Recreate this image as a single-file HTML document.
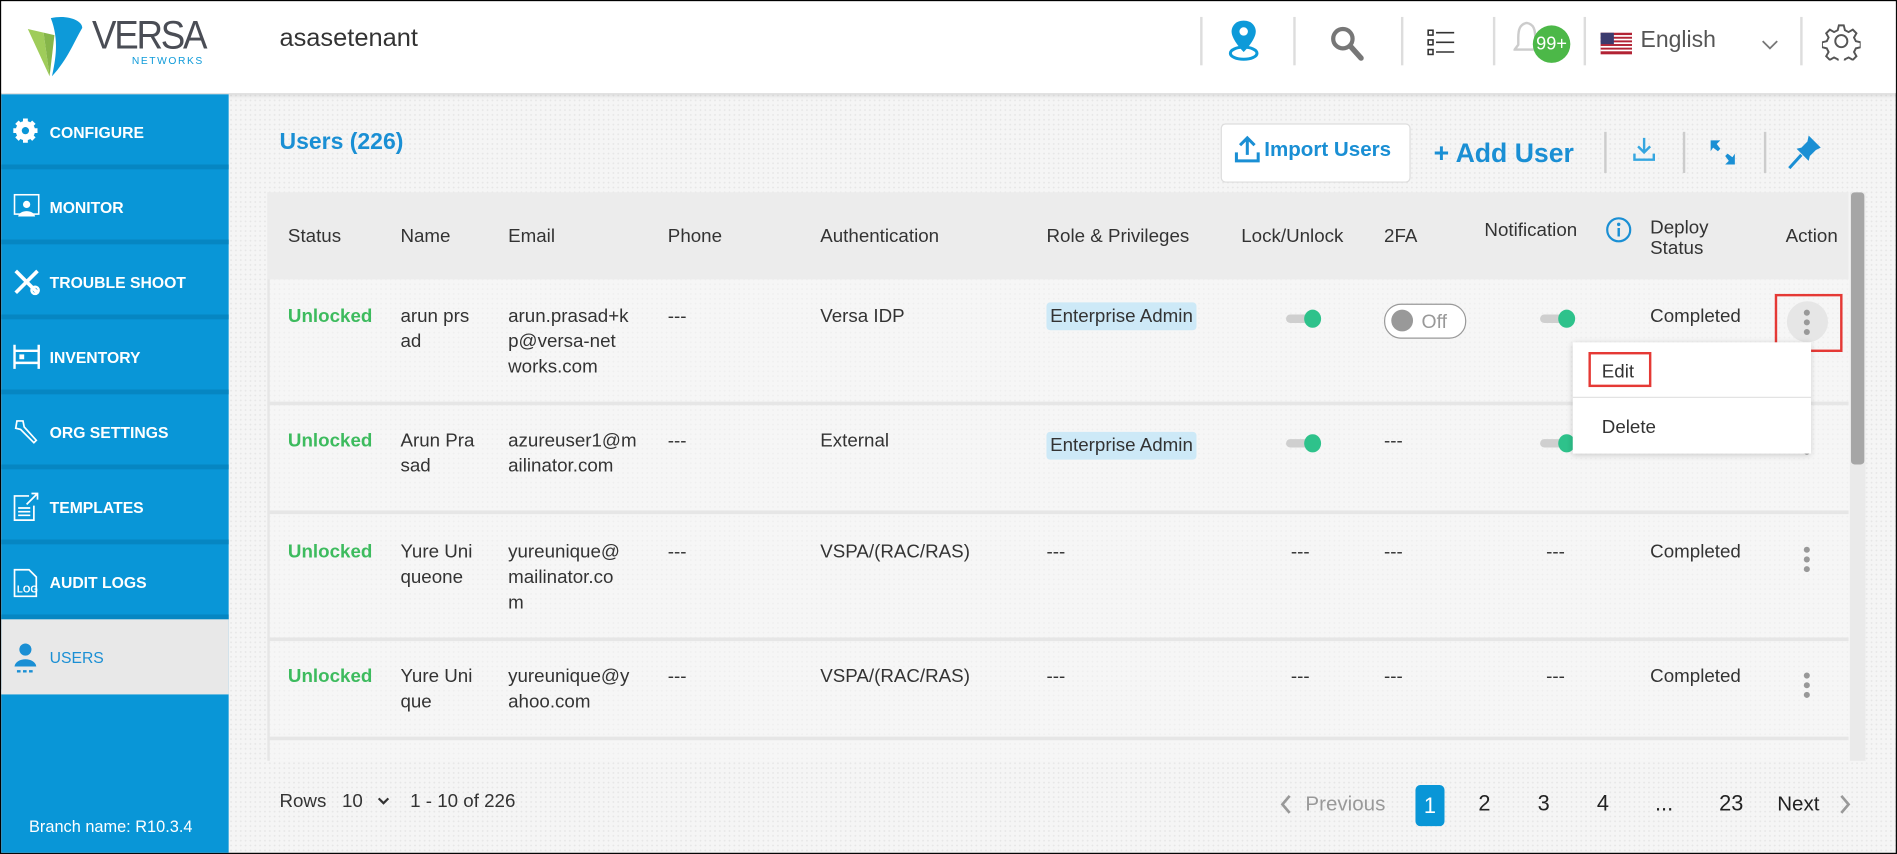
<!DOCTYPE html>
<html><head><meta charset="utf-8"><style>
html,body{margin:0;padding:0;width:1897px;height:854px;overflow:hidden;background:#fff}
#s{position:absolute;left:0;top:0;width:1568px;height:706px;transform:scale(1.2098,1.2096);transform-origin:0 0;font-family:"Liberation Sans",sans-serif;color:#333;overflow:hidden;box-sizing:border-box;border:1px solid #000;background:#f5f5f5;
background-image:radial-gradient(#e6e6e6 0.6px,transparent 0.8px);background-size:4px 4px}
.a{position:absolute;white-space:nowrap}
#hdr{position:absolute;left:0;top:0;width:1568px;height:76px;background:#fff;box-shadow:0 2px 4px rgba(0,0,0,.12)}
.vd{position:absolute;top:13px;width:2px;height:40px;background:#ddd}
#side{position:absolute;left:0;top:77px;width:188px;height:629px;background:#0996d7}
.it{position:absolute;left:0;width:188px;height:58px;border-bottom:4px solid #0686c2;color:#fff;font-weight:bold;font-size:13px}
.it span{position:absolute;left:40px;top:24px}
.it svg{position:absolute;left:9px;top:19px}
.hd{font-size:15.5px;color:#333}
.c{font-size:15.5px;color:#333;line-height:21px}
.g{color:#3dbb5e;font-weight:bold}
.rl{position:absolute;left:220px;width:1307px;height:3px;background:#e6e6e6}
.badge{background:#cde9f7;border-radius:3px;padding:3px 3px}
.tg{position:absolute;width:26px;height:7px;border-radius:4px;background:#cfcfcf}
.tg:after{content:"";position:absolute;right:-3px;top:-4px;width:14px;height:15px;border-radius:50%;background:#2ec28b}
.dots{position:absolute;width:5px}
.dots i{display:block;width:5px;height:5px;border-radius:50%;background:#999;margin-bottom:3px}
</style></head><body><div id="s">
<div id="hdr">
 <svg class="a" style="left:15px;top:8px" width="60" height="56" viewBox="0 0 60 56"><path d="M7 15 L20 18 L25 54 Z" fill="#9fcc5a"/><path d="M26 6 C40 3 52 8 52 14 C46 24 40 40 27 54 C30 40 33 24 26 6Z" fill="#0d9ad9"/><path d="M20 18 L29 20 L25 54Z" fill="#86b64a"/></svg>
 <div class="a" style="left:75px;top:9px;font-size:33px;color:#4a4d55;letter-spacing:-2px;transform:scaleX(0.92);transform-origin:0 0">VERSA</div>
 <div class="a" style="left:108px;top:44px;font-size:8.5px;color:#0d9ad9;letter-spacing:1.3px">NETWORKS</div>
 <div class="a" style="left:230px;top:19px;font-size:21px;color:#333">asasetenant</div>
 <div class="vd" style="left:991px"></div><div class="vd" style="left:1068px"></div><div class="vd" style="left:1157px"></div><div class="vd" style="left:1233px"></div><div class="vd" style="left:1308px"></div><div class="vd" style="left:1487px"></div>
 <svg class="a" style="left:1013px;top:14px" width="28" height="36" viewBox="0 0 28 36"><path d="M14 2 C7 2 4 7 4 11 C4 18 14 28 14 28 C14 28 24 18 24 11 C24 7 21 2 14 2Z" fill="#0d9ad9"/><circle cx="14" cy="11" r="3.5" fill="#fff"/><ellipse cx="14" cy="29" rx="11" ry="5" fill="none" stroke="#0d9ad9" stroke-width="2.5"/></svg>
 <svg class="a" style="left:1098px;top:20px" width="30" height="30" viewBox="0 0 30 30"><circle cx="11" cy="11" r="8" fill="none" stroke="#777" stroke-width="3.5"/><path d="M17 17 L26 27" stroke="#777" stroke-width="4.5" stroke-linecap="round"/></svg>
 <svg class="a" style="left:1178px;top:22px" width="26" height="26" viewBox="0 0 26 26"><g fill="none" stroke="#333" stroke-width="1.3"><rect x="1.5" y="2" width="4" height="4"/><rect x="1.5" y="10" width="4" height="4"/><rect x="1.5" y="18" width="4" height="4"/><path d="M8 4H23M8 12H23M8 20H23"/></g></svg>
 <svg class="a" style="left:1250px;top:16px" width="22" height="30" viewBox="0 0 22 30"><path d="M11 2 C5 3 4 8 4 14 L4 20 L1 24 L21 24 L18 20 L18 14 C18 8 17 3 11 2Z" fill="none" stroke="#ccc" stroke-width="2"/></svg>
 <div class="a" style="left:1266px;top:20px;width:31px;height:31px;border-radius:50%;background:#4cb848;color:#fff;font-size:15px;line-height:31px;text-align:center">99+</div>
 <svg class="a" style="left:1322px;top:26px" width="26" height="18" viewBox="0 0 26 18"><rect width="26" height="18" fill="#b22234"/><g fill="#fff"><rect y="2" width="26" height="1.4"/><rect y="5" width="26" height="1.4"/><rect y="8" width="26" height="1.4"/><rect y="11" width="26" height="1.4"/><rect y="14" width="26" height="1.4"/></g><rect width="11" height="9.5" fill="#3c3b6e"/></svg>
 <div class="a" style="left:1355px;top:22px;font-size:19px;color:#555">English</div>
 <svg class="a" style="left:1454px;top:30px" width="16" height="12" viewBox="0 0 16 12"><path d="M2 3 L8 9 L14 3" fill="none" stroke="#777" stroke-width="1.5"/></svg>
 <svg class="a" style="left:1505px;top:17px" width="32" height="32" viewBox="0 0 32 32"><g fill="none" stroke="#555" stroke-width="1.6"><circle cx="16" cy="16" r="5"/><path d="M14 3h4l1 4 3 1.5 3.5-2 3 3-2 3.5 1.5 3 4 1v4l-4 1-1.5 3 2 3.5-3 3-3.5-2-3 1.5-1 4h-4l-1-4-3-1.5-3.5 2-3-3 2-3.5-1.5-3-4-1v-4l4-1 1.5-3-2-3.5 3-3 3.5 2 3-1.5z"/></g></svg>
</div>
<div id="side">
 <div class="it" style="top:0"><svg width="22" height="22" viewBox="0 0 22 22"><circle cx="11" cy="11" r="8" fill="#fff"/><g stroke="#fff" stroke-width="4"><path d="M11 1v20M1 11h20M4 4l14 14M18 4L4 18"/></g><circle cx="11" cy="11" r="3" fill="#0996d7"/></svg><span>CONFIGURE</span></div>
 <div class="it" style="top:62px"><svg width="24" height="24" viewBox="0 0 24 24"><rect x="2" y="2" width="20" height="16" fill="none" stroke="#fff" stroke-width="1.3"/><circle cx="12" cy="10" r="3" fill="#fff"/><path d="M5 20 C6 14 18 14 19 20Z" fill="#fff"/></svg><span>MONITOR</span></div>
 <div class="it" style="top:124px"><svg width="24" height="24" viewBox="0 0 24 24"><path d="M3 3 L21 21 M21 3 L3 21" stroke="#fff" stroke-width="3"/><circle cx="19" cy="19" r="3" fill="none" stroke="#fff" stroke-width="2"/></svg><span>TROUBLE SHOOT</span></div>
 <div class="it" style="top:186px"><svg width="24" height="24" viewBox="0 0 24 24"><g fill="none" stroke="#fff" stroke-width="2"><path d="M2 2v20M22 2v20M2 7h20M2 17h20"/></g><rect x="6" y="10" width="4" height="4" fill="#fff"/></svg><span>INVENTORY</span></div>
 <div class="it" style="top:248px"><svg width="24" height="24" viewBox="0 0 24 24"><path d="M4 3 L9 3 L10 8 L20 19 L18 21 L7 10 L3 9Z" fill="none" stroke="#fff" stroke-width="1.4"/></svg><span>ORG SETTINGS</span></div>
 <div class="it" style="top:310px"><svg width="24" height="24" viewBox="0 0 24 24"><g fill="none" stroke="#fff" stroke-width="1.4"><path d="M14 3H2v20h16V11"/><path d="M12 10 L21 1 M16 1h5v5M5 13h10M5 16h10M5 19h10"/></g></svg><span>TEMPLATES</span></div>
 <div class="it" style="top:372px"><svg width="24" height="26" viewBox="0 0 24 26"><path d="M2 2h12l6 6v16H2z" fill="none" stroke="#fff" stroke-width="1.4"/><text x="4" y="21" font-size="8" fill="#fff" font-family="Liberation Sans">LOG</text></svg><span>AUDIT LOGS</span></div>
 <div class="it" style="top:434px;background:#e8e8e8;color:#1a8fd4;font-weight:normal;border-bottom:4px solid #e8e8e8"><svg width="24" height="26" viewBox="0 0 24 26"><circle cx="11" cy="6" r="5" fill="#1a8fd4"/><path d="M2 20 C3 12 19 12 20 20Z" fill="#1a8fd4"/><path d="M4 24h3M9 24h3M14 24h3" stroke="#1a8fd4" stroke-width="2"/></svg><span>USERS</span></div>
 <div class="a" style="left:23px;top:598px;color:#fff;font-size:13.5px">Branch name: R10.3.4</div>
</div>
<div class="a" style="left:230px;top:106px;font-size:19px;color:#1a8fd4;font-weight:bold">Users (226)</div>
<div class="a" style="left:1008px;top:101px;width:155px;height:47px;border:1px solid #ddd;border-radius:4px;background:#fff"></div>
<svg class="a" style="left:1018px;top:111px" width="24" height="24" viewBox="0 0 24 24"><path d="M12 2v14M6 8l6-6 6 6" fill="none" stroke="#1a8fd4" stroke-width="2.5"/><path d="M3 14v7h18v-7" fill="none" stroke="#1a8fd4" stroke-width="2.5"/></svg>
<div class="a" style="left:1044px;top:113px;font-size:17px;color:#1a8fd4;font-weight:bold">Import Users</div>
<div class="a" style="left:1184px;top:113px;font-size:22px;color:#1a8fd4;font-weight:bold">+ Add User</div>
<div class="a" style="left:1325px;top:108px;width:2px;height:34px;background:#ccc"></div>
<div class="a" style="left:1390px;top:108px;width:2px;height:34px;background:#ccc"></div>
<div class="a" style="left:1457px;top:108px;width:2px;height:34px;background:#ccc"></div>
<svg class="a" style="left:1348px;top:112px" width="20" height="22" viewBox="0 0 20 22"><path d="M10 1v12M5 8l5 5 5-5" fill="none" stroke="#35a6e0" stroke-width="2"/><path d="M2 14v5h16v-5" fill="none" stroke="#35a6e0" stroke-width="2"/></svg>
<svg class="a" style="left:1410px;top:112px" width="26" height="26" viewBox="0 0 26 26"><path d="M3 3l8 0-3 3 3 4-2 2-4-3-2 3z" fill="#1a8fd4"/><path d="M23 23l-8 0 3-3-3-4 2-2 4 3 2-3z" fill="#1a8fd4"/></svg>
<svg class="a" style="left:1476px;top:108px" width="30" height="32" viewBox="0 0 30 32"><path d="M18 3 L28 13 L24 15 L19 20 L18 24 L8 14 L12 13 L17 8Z" fill="#1a8fd4"/><path d="M12 19 L2 30" stroke="#1a8fd4" stroke-width="2.5"/></svg>
<!-- table -->
<div class="a" style="left:220px;top:158px;width:1307px;height:470px;background:rgba(248,248,248,.5);border-left:2px solid #e6e6e6"></div>
<div class="a" style="left:220px;top:158px;width:1307px;height:72px;background:#ececec"></div>
<div class="a" style="left:1528px;top:158px;width:13px;height:470px;background:#eaeaea"></div>
<div class="a" style="left:1529px;top:158px;width:11px;height:225px;background:#a6a6a6;border-radius:3px"></div>
<div class="a hd" style="left:237px;top:186px">Status</div>
<div class="a hd" style="left:330px;top:186px">Name</div>
<div class="a hd" style="left:419px;top:186px">Email</div>
<div class="a hd" style="left:551px;top:186px">Phone</div>
<div class="a hd" style="left:677px;top:186px">Authentication</div>
<div class="a hd" style="left:864px;top:186px">Role &amp; Privileges</div>
<div class="a hd" style="left:1025px;top:186px">Lock/Unlock</div>
<div class="a hd" style="left:1143px;top:186px">2FA</div>
<div class="a hd" style="left:1226px;top:181px">Notification</div>
<svg class="a" style="left:1326px;top:178px" width="22" height="22" viewBox="0 0 22 22"><circle cx="11" cy="11" r="9.5" fill="none" stroke="#1a8fd4" stroke-width="1.8"/><circle cx="11" cy="6.5" r="1.4" fill="#1a8fd4"/><path d="M11 9.5v7" stroke="#1a8fd4" stroke-width="2"/></svg>
<div class="a hd" style="left:1363px;top:179px;line-height:17px">Deploy<br>Status</div>
<div class="a hd" style="left:1475px;top:186px">Action</div>
<div class="rl" style="top:331px"></div><div class="rl" style="top:421px"></div><div class="rl" style="top:526px"></div><div class="rl" style="top:608px"></div>
<!-- row1 -->
<div class="a c g" style="left:237px;top:250px">Unlocked</div>
<div class="a c" style="left:330px;top:250px">arun prs<br>ad</div>
<div class="a c" style="left:419px;top:250px">arun.prasad+k<br>p@versa-net<br>works.com</div>
<div class="a c" style="left:551px;top:250px">---</div>
<div class="a c" style="left:677px;top:250px">Versa IDP</div>
<div class="a c" style="left:864px;top:250px"><span class="badge">Enterprise Admin</span></div>
<div class="tg" style="left:1062px;top:259px"></div>
<div class="a" style="left:1143px;top:250px;width:66px;height:27px;border:1px solid #999;border-radius:14px;background:#fff"></div>
<div class="a" style="left:1149px;top:255px;width:18px;height:18px;border-radius:50%;background:#999"></div>
<div class="a c" style="left:1174px;top:255px;color:#999;font-size:16px">Off</div>
<div class="tg" style="left:1272px;top:259px"></div>
<div class="a c" style="left:1363px;top:250px">Completed</div>
<div class="a" style="left:1476px;top:248px;width:34px;height:34px;border-radius:50%;background:#e6e6e6"></div>
<div class="dots" style="left:1490px;top:255px"><i></i><i></i><i></i></div>
<div class="a" style="left:1466px;top:242px;width:52px;height:44px;border:2px solid #e53935"></div>
<!-- row2 -->
<div class="a c g" style="left:237px;top:353px">Unlocked</div>
<div class="a c" style="left:330px;top:353px">Arun Pra<br>sad</div>
<div class="a c" style="left:419px;top:353px">azureuser1@m<br>ailinator.com</div>
<div class="a c" style="left:551px;top:353px">---</div>
<div class="a c" style="left:677px;top:353px">External</div>
<div class="a c" style="left:864px;top:357px"><span class="badge">Enterprise Admin</span></div>
<div class="tg" style="left:1062px;top:362px"></div>
<div class="a c" style="left:1143px;top:353px">---</div>
<div class="tg" style="left:1272px;top:362px"></div>
<div class="dots" style="left:1490px;top:370px"><i></i></div>
<!-- row3 -->
<div class="a c g" style="left:237px;top:445px">Unlocked</div>
<div class="a c" style="left:330px;top:445px">Yure Uni<br>queone</div>
<div class="a c" style="left:419px;top:445px">yureunique@<br>mailinator.co<br>m</div>
<div class="a c" style="left:551px;top:445px">---</div>
<div class="a c" style="left:677px;top:445px">VSPA/(RAC/RAS)</div>
<div class="a c" style="left:864px;top:445px">---</div>
<div class="a c" style="left:1066px;top:445px">---</div>
<div class="a c" style="left:1143px;top:445px">---</div>
<div class="a c" style="left:1277px;top:445px">---</div>
<div class="a c" style="left:1363px;top:445px">Completed</div>
<div class="dots" style="left:1490px;top:451px"><i></i><i></i><i></i></div>
<!-- row4 -->
<div class="a c g" style="left:237px;top:548px">Unlocked</div>
<div class="a c" style="left:330px;top:548px">Yure Uni<br>que</div>
<div class="a c" style="left:419px;top:548px">yureunique@y<br>ahoo.com</div>
<div class="a c" style="left:551px;top:548px">---</div>
<div class="a c" style="left:677px;top:548px">VSPA/(RAC/RAS)</div>
<div class="a c" style="left:864px;top:548px">---</div>
<div class="a c" style="left:1066px;top:548px">---</div>
<div class="a c" style="left:1143px;top:548px">---</div>
<div class="a c" style="left:1277px;top:548px">---</div>
<div class="a c" style="left:1363px;top:548px">Completed</div>
<div class="dots" style="left:1490px;top:555px"><i></i><i></i><i></i></div>
<!-- dropdown -->
<div class="a" style="left:1299px;top:282px;width:197px;height:92px;background:#fff;box-shadow:0 1px 5px rgba(0,0,0,.18)"></div>
<div class="a" style="left:1299px;top:327px;width:197px;height:1px;background:#e2e2e2"></div>
<div class="a" style="left:1312px;top:290px;width:52px;height:29px;border:2px solid #e53935;box-sizing:border-box"></div>
<div class="a c" style="left:1323px;top:296px">Edit</div>
<div class="a c" style="left:1323px;top:342px">Delete</div>
<!-- footer -->
<div class="a c" style="left:230px;top:651px">Rows&nbsp;&nbsp; 10</div>
<svg class="a" style="left:310px;top:656px" width="12" height="10" viewBox="0 0 12 10"><path d="M2 3l4 4 4-4" fill="none" stroke="#333" stroke-width="1.8"/></svg>
<div class="a c" style="left:338px;top:651px">1 - 10 of 226</div>
<svg class="a" style="left:1056px;top:655px" width="12" height="18" viewBox="0 0 12 18"><path d="M9 2L3 9l6 7" fill="none" stroke="#999" stroke-width="2.2"/></svg>
<div class="a" style="left:1078px;top:654px;font-size:17px;color:#999">Previous</div>
<div class="a" style="left:1169px;top:648px;width:24px;height:34px;border-radius:4px;background:#0996d7;color:#fff;font-size:18px;line-height:34px;text-align:center">1</div>
<div class="a" style="left:1221px;top:653px;font-size:18px;color:#222">2</div>
<div class="a" style="left:1270px;top:653px;font-size:18px;color:#222">3</div>
<div class="a" style="left:1319px;top:653px;font-size:18px;color:#222">4</div>
<div class="a" style="left:1367px;top:653px;font-size:18px;color:#222">...</div>
<div class="a" style="left:1420px;top:653px;font-size:18px;color:#222">23</div>
<div class="a" style="left:1468px;top:654px;font-size:17px;color:#222">Next</div>
<svg class="a" style="left:1518px;top:655px" width="12" height="18" viewBox="0 0 12 18"><path d="M3 2l6 7-6 7" fill="none" stroke="#999" stroke-width="2.2"/></svg>
</div></body></html>
